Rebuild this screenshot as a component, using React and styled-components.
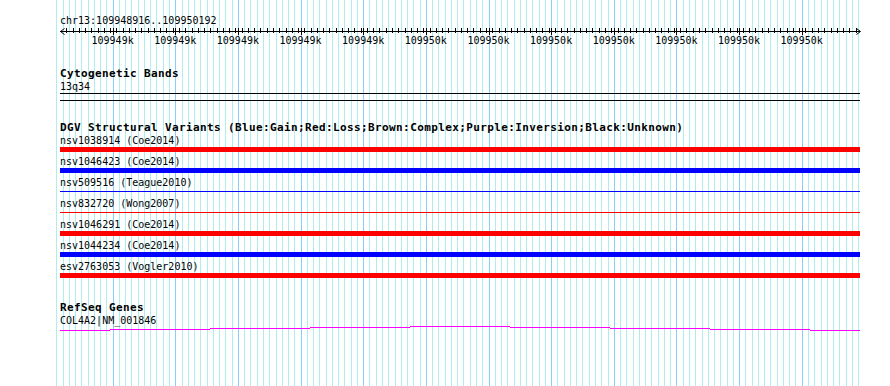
import React from 'react'
import styled, { createGlobalStyle } from 'styled-components'

const WIDTH = 890
const HEIGHT = 386
const LEFT = 60
const SPAN = 800
const START = 109948916
const END = 109950192
const PX_PER_BP = SPAN / (END - START + 1)

const xOf = bp => LEFT + (bp - START) * PX_PER_BP

const GlobalStyle = createGlobalStyle`
	html, body {
		margin: 0;
		padding: 0;
		background: #fff;
	}
`

const Page = styled.div`
	position: relative;
	width: ${WIDTH}px;
	height: ${HEIGHT}px;
	overflow: hidden;
	background: #fff;
	font-family: "DejaVu Sans Mono", "Liberation Mono", monospace;
	color: #000;
`

const GridLayer = styled.svg`
	position: absolute;
	left: 0;
	top: 0;
	z-index: 0;
`

const Tracks = styled.div`
	position: relative;
	z-index: 1;
	display: flex;
	flex-direction: column;
	width: ${SPAN}px;
	margin-left: ${LEFT}px;
`

const Caption = styled.div`
	font-size: 10px;
	line-height: 10px;
	height: 10px;
	white-space: nowrap;
	margin-top: ${p => p.$top || 0}px;
`

const TrackTitle = styled.div`
	font-size: 11px;
	letter-spacing: 0.38px;
	font-weight: bold;
	line-height: 12px;
	height: 12px;
	white-space: nowrap;
	margin-top: ${p => p.$top}px;
`

const RulerSvg = styled.svg`
	display: block;
	overflow: visible;
`

const TickRow = styled.div`
	display: flex;
	height: 10px;
	padding-left: ${p => p.$offset}px;
`

const TickLabel = styled.span`
	flex: 0 0 ${p => p.$width}px;
	text-align: center;
	font-size: 10px;
	line-height: 10px;
	white-space: nowrap;
`

const BandBox = styled.div`
	margin-top: 1px;
	height: 6px;
	border-top: 1px solid #000;
	border-bottom: 1px solid #000;
`

const VariantList = styled.div`
	display: flex;
	flex-direction: column;
	margin-top: 2px;
`

const Bar = styled.div`
	background: ${p => p.$color};
	height: ${p => (p.$thin ? 1 : 5)}px;
	margin-top: ${p => (p.$thin ? 3 : 1)}px;
	margin-bottom: ${p => (p.$thin ? 7 : 5)}px;
`

const GeneSvg = styled.svg`
	display: block;
`

const variants = [
	{ name: 'nsv1038914 (Coe2014)', color: '#ff0000' },
	{ name: 'nsv1046423 (Coe2014)', color: '#0000ff' },
	{ name: 'nsv509516 (Teague2010)', color: '#0000ff', thin: true },
	{ name: 'nsv832720 (Wong2007)', color: '#ff0000', thin: true },
	{ name: 'nsv1046291 (Coe2014)', color: '#ff0000' },
	{ name: 'nsv1044234 (Coe2014)', color: '#0000ff' },
	{ name: 'esv2763053 (Vogler2010)', color: '#ff0000' },
]

// staircase of the transcript line (abs y per 100px step)
const geneSteps = [
	[60, 110, 330], [110, 210, 329], [210, 310, 328], [310, 410, 327], [410, 510, 326],
	[510, 610, 327], [610, 710, 328], [710, 810, 329], [810, 860, 330],
]
const GENE_TOP = 326

function Grid() {
	const lines = []
	for (let bp = 109948910; bp <= 109950190; bp += 10) {
		const major = bp % 100 === 0
		lines.push(
			<rect key={bp} x={Math.round(xOf(bp))} y={0} width={1} height={HEIGHT}
				fill={major ? '#87cefa' : '#afeeee'} />
		)
	}
	return (
		<GridLayer width={WIDTH} height={HEIGHT} shapeRendering="crispEdges">
			{lines}
		</GridLayer>
	)
}

function Ruler() {
	const ticks = []
	for (let bp = START + 10; bp < END; bp += 10) {
		ticks.push(<rect key={bp} x={Math.round(xOf(bp) - LEFT)} y={2} width={1} height={5} fill="#000" />)
	}
	for (let bp = 109949000; bp <= 109950100; bp += 100) {
		ticks.push(<rect key={'m' + bp} x={Math.round(xOf(bp) - LEFT)} y={2} width={1} height={7} fill="#000" />)
	}
	return (
		<RulerSvg width={SPAN + 2} height={10}>
			<rect x={0} y={5} width={SPAN} height={1} fill="#000" shapeRendering="crispEdges" />
			<g shapeRendering="crispEdges">{ticks}</g>
			<polyline points="4.5,2.5 0.5,5.5 4.5,8.5" fill="none" stroke="#000" strokeWidth="1" />
			<polyline points="796.5,2.5 800.5,5.5 796.5,8.5" fill="none" stroke="#000" strokeWidth="1" />
		</RulerSvg>
	)
}

function App() {
	const step = 100 * PX_PER_BP
	const labels = []
	for (let bp = 109949000; bp <= 109950100; bp += 100) labels.push(bp)

	return (
		<Page>
			<GlobalStyle />
			<Grid />
			<Tracks>
				<Caption $top={16}>chr13:109948916..109950192</Caption>
				<Ruler />
				<TickRow $offset={xOf(109949000) - LEFT - step / 2}>
					{labels.map(bp => (
						<TickLabel key={bp} $width={step}>{Math.round(bp / 1000)}k</TickLabel>
					))}
				</TickRow>

				<TrackTitle $top={22}>Cytogenetic Bands</TrackTitle>
				<Caption $top={2}>13q34</Caption>
				<BandBox />

				<TrackTitle $top={21}>DGV Structural Variants (Blue:Gain;Red:Loss;Brown:Complex;Purple:Inversion;Black:Unknown)</TrackTitle>
				<VariantList>
					{variants.map(v => (
						<React.Fragment key={v.name}>
							<Caption>{v.name}</Caption>
							<Bar $color={v.color} $thin={v.thin} />
						</React.Fragment>
					))}
				</VariantList>

				<TrackTitle $top={19}>RefSeq Genes</TrackTitle>
				<Caption $top={2}>COL4A2|NM_001846</Caption>
				<GeneSvg width={SPAN} height={6} shapeRendering="crispEdges">
					{geneSteps.map(([x1, x2, y]) => (
						<rect key={x1} x={x1 - LEFT} y={y - GENE_TOP} width={x2 - x1} height={1} fill="#ff00ff" />
					))}
				</GeneSvg>
			</Tracks>
		</Page>
	)
}

export default App
